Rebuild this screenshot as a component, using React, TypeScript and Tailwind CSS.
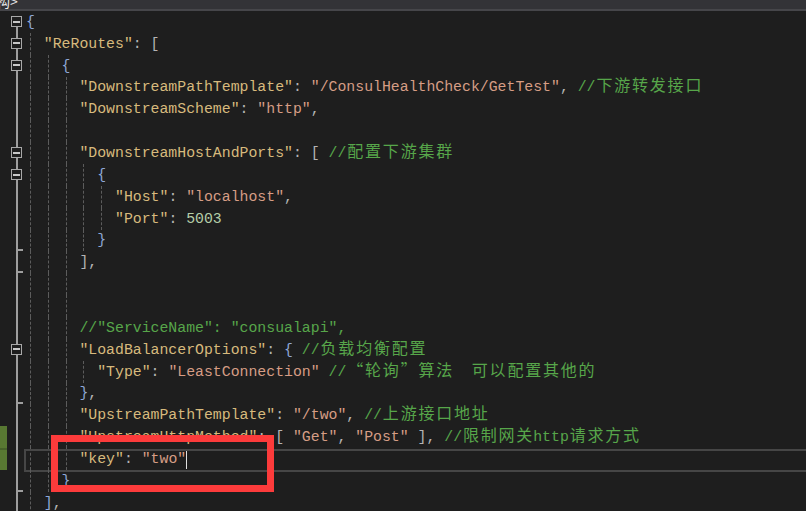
import type { ReactNode } from "react";

type Tok = [string, string];

const K = "text-[#d7ba7d]";
const S = "text-[#d69d85]";
const P = "text-[#b4b4b4]";
const B = "text-[#8fa8d6]";
const C = "text-[#57a64a]";
const N = "text-[#b5cea8]";

const lines: { indent: number; toks: Tok[] }[] = [
  { indent: 0, toks: [[B, "{"]] },
  { indent: 2, toks: [[K, '"ReRoutes"'], [P, ": "], [P, "["]] },
  { indent: 4, toks: [[B, "{"]] },
  {
    indent: 6,
    toks: [[K, '"DownstreamPathTemplate"'], [P, ": "], [S, '"/ConsulHealthCheck/GetTest"'], [P, ", "], [C, "//下游转发接口"]],
  },
  { indent: 6, toks: [[K, '"DownstreamScheme"'], [P, ": "], [S, '"http"'], [P, ","]] },
  { indent: 0, toks: [] },
  { indent: 6, toks: [[K, '"DownstreamHostAndPorts"'], [P, ": "], [P, "[ "], [C, "//配置下游集群"]] },
  { indent: 8, toks: [[B, "{"]] },
  { indent: 10, toks: [[K, '"Host"'], [P, ": "], [S, '"localhost"'], [P, ","]] },
  { indent: 10, toks: [[K, '"Port"'], [P, ": "], [N, "5003"]] },
  { indent: 8, toks: [[B, "}"]] },
  { indent: 6, toks: [[P, "],"]] },
  { indent: 0, toks: [] },
  { indent: 0, toks: [] },
  { indent: 6, toks: [[C, '//"ServiceName": "consualapi",']] },
  { indent: 6, toks: [[K, '"LoadBalancerOptions"'], [P, ": "], [B, "{ "], [C, "//负载均衡配置"]] },
  { indent: 8, toks: [[K, '"Type"'], [P, ": "], [S, '"LeastConnection" '], [C, "//“轮询”算法  可以配置其他的"]] },
  { indent: 6, toks: [[B, "}"], [P, ","]] },
  { indent: 6, toks: [[K, '"UpstreamPathTemplate"'], [P, ": "], [S, '"/two"'], [P, ", "], [C, "//上游接口地址"]] },
  {
    indent: 6,
    toks: [
      [K, '"UpstreamHttpMethod"'],
      [P, ": [ "],
      [S, '"Get"'],
      [P, ", "],
      [S, '"Post"'],
      [P, " ], "],
      [C, "//限制网关http请求方式"],
    ],
  },
  { indent: 6, toks: [[K, '"key"'], [P, ": "], [S, '"two"']] },
  { indent: 4, toks: [[B, "}"]] },
  { indent: 2, toks: [[B, "]"], [P, ","]] },
];

const guideLeft: Record<number, string> = {
  0: "left-[4px]",
  2: "left-[21.8px]",
  4: "left-[39.6px]",
  6: "left-[57.4px]",
  8: "left-[75.2px]",
};

function guidesFor(row: number) {
  const g: number[] = [];
  if (row >= 1) g.push(0);
  if (row >= 2 && row <= 21) g.push(2);
  if (row >= 3 && row <= 20) g.push(4);
  if ((row >= 7 && row <= 10) || row === 16) g.push(6);
  if (row >= 8 && row <= 9) g.push(8);
  return g;
}

const boxes = [0, 1, 2, 6, 7, 15];
const ticks = [10, 11, 17, 21];
const wide = /[\u3000-\u9fff\uff00-\uffef“”]/;

function renderText(text: string): ReactNode[] {
  const out: ReactNode[] = [];
  let buf = "";
  Array.from(text).forEach((ch, i) => {
    if (wide.test(ch)) {
      if (buf) out.push(buf);
      buf = "";
      out.push(
        <span key={i} className="inline-block w-[17.8px] text-center font-['Noto_Sans_CJK_SC',sans-serif] text-[16px] leading-none">
          {ch}
        </span>
      );
    } else {
      buf += ch;
    }
  });
  if (buf) out.push(buf);
  return out;
}

function Gutter({ row }: { row: number }) {
  return (
    <div className="relative h-full w-[26px] shrink-0">
      {(row === 19 || row === 20) && (
        <div className={`absolute inset-y-0 left-0 w-[7px] bg-[#587832] ${row === 20 ? "border-t-2 border-[#47622a]" : ""}`} />
      )}
      <div className={`absolute bottom-0 left-[16px] w-[2px] bg-[#9e9e9e] ${row === 0 ? "top-1/2" : "top-0"}`} />
      {boxes.includes(row) && (
        <div className="absolute left-[11px] top-[5px] flex h-[11px] w-[11px] items-center justify-center border border-[#a8a8a8] bg-[#1e1e1e]">
          <div className="h-[2px] w-[7px] bg-[#c8c8c8]" />
        </div>
      )}
      {ticks.includes(row) && <div className="absolute bottom-0 left-[17px] h-[2px] w-[6px] bg-[#9e9e9e]" />}
    </div>
  );
}

export default function App() {
  return (
    <div className="relative h-[511px] w-[806px] overflow-hidden bg-[#1e1e1e] font-['Liberation_Mono',monospace] text-[14.83px]">
      <div className="h-[9px] overflow-hidden bg-[#333337]">
        <div className="-ml-[4px] -mt-[7px] font-['Noto_Sans_CJK_SC',sans-serif] text-[14px] leading-[16px] text-[#e8e8e8]">构&gt;</div>
      </div>
      <div className="h-[2px] bg-[#46464a]" />
      {lines.map((line, row) => (
        <div key={row} className="relative flex h-[21.86px] items-center">
          <Gutter row={row} />
          <div className="relative flex h-full flex-1 items-center whitespace-pre">
            {guidesFor(row).map((c) => (
              <div key={c} className={`absolute inset-y-0 w-0 border-l border-dashed border-[#5c5c5c] ${guideLeft[c]}`} />
            ))}
            <span className="relative">
              {" ".repeat(line.indent)}
              {line.toks.map(([cls, text], i) => (
                <span key={i} className={cls}>
                  {renderText(text)}
                </span>
              ))}
              {row === 20 && <span className="inline-block h-[19px] w-px bg-[#e0e0e0] align-middle" />}
            </span>
          </div>
          {row === 20 && (
            <div className="pointer-events-none absolute -bottom-[2px] left-[24px] right-0 top-px border-2 border-r-0 border-[#464646]" />
          )}
        </div>
      ))}
      <div className="absolute left-[51px] top-[435px] h-[57px] w-[223px] border-[7px] border-[#fc3b3b]" />
    </div>
  );
}
